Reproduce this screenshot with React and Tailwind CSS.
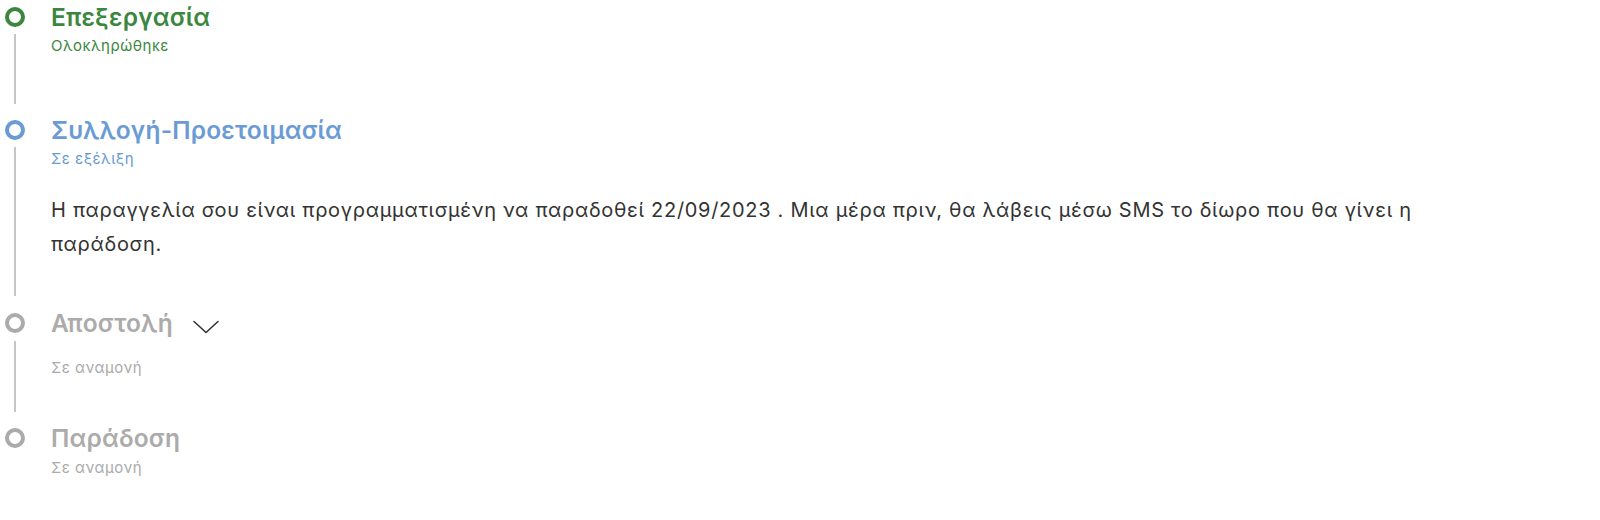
import React from 'react';

const steps = [
  {
    title: 'Επεξεργασία',
    status: 'Ολοκληρώθηκε',
    tone: 'done',
  },
  {
    title: 'Συλλογή-Προετοιμασία',
    status: 'Σε εξέλιξη',
    tone: 'active',
    text: 'Η παραγγελία σου είναι προγραμματισμένη να παραδοθεί 22/09/2023 . Μια μέρα πριν, θα λάβεις μέσω SMS το δίωρο που θα γίνει η παράδοση.',
  },
  {
    title: 'Αποστολή',
    status: 'Σε αναμονή',
    tone: 'pending',
    toggle: true,
  },
  {
    title: 'Παράδοση',
    status: 'Σε αναμονή',
    tone: 'pending',
  },
];

const tones = {
  done: { ring: 'border-[#3b873e]', title: 'text-[#3b873e]', sub: 'text-[#3b873e]' },
  active: { ring: 'border-[#6a9bd5]', title: 'text-[#6a9bd5]', sub: 'text-[#6a9bd5]' },
  pending: { ring: 'border-[#ababab]', title: 'text-[#ababab]', sub: 'text-[#ababab]' },
};

const Chevron = () => (
  <svg width="26" height="14" viewBox="0 0 26 14" fill="none">
    <path d="M1 1.5 L13 12.5 L25 1.5" stroke="#333" strokeWidth="1.6" strokeLinecap="round" strokeLinejoin="round" />
  </svg>
);

const Step = ({ step, last }) => {
  const t = tones[step.tone];
  return (
    <div className="flex">
      <div className="w-[30px] flex flex-col items-center">
        <div className={`${step.toggle ? 'h-[34px]' : 'h-8'} flex items-center`}>
          <div className={`w-5 h-5 rounded-full border-4 ${t.ring}`}></div>
        </div>
        {!last && <div className="w-[2px] flex-1 bg-[#c6c6c6] mt-[1px] mb-[10px]"></div>}
      </div>
      <div className={`pl-[21px] flex-1 ${last ? '' : step.text ? 'pb-[45px]' : step.toggle ? 'pb-[44px]' : 'pb-[58px]'}`}>
        <div className={`${step.toggle ? 'h-[34px]' : 'h-8'} flex items-center gap-[18px]`}>
          <span className={`text-[24.5px] leading-8 font-semibold tracking-[0.2px] ${t.title}`}>{step.title}</span>
          {step.toggle && (
            <button className="translate-y-[4px] px-0.5">
              <Chevron />
            </button>
          )}
        </div>
        <div className={`text-[15px] leading-5 tracking-[0.5px] ${t.sub} ${step.toggle ? 'mt-[18px]' : last ? 'mt-[4px]' : 'mt-[3px]'}`}>{step.status}</div>
        {step.text && (
          <p className="mt-[24px] max-w-[1400px] text-[20px] leading-[34px] tracking-[0.7px] text-[#333]">{step.text}</p>
        )}
      </div>
    </div>
  );
};

export default function App() {
  return (
    <div className="w-[1600px] h-[520px] bg-white pt-px" style={{ fontFamily: 'Inter, "Noto Sans", sans-serif' }}>
      {steps.map((s, i) => (
        <Step key={s.title} step={s} last={i === steps.length - 1} />
      ))}
    </div>
  );
}
